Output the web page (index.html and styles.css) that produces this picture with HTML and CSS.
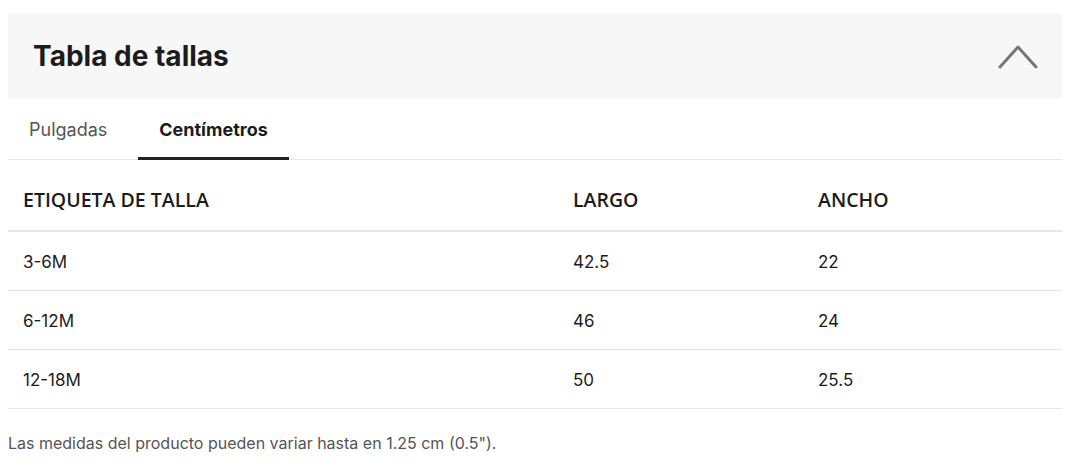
FILE: index.html
```html
<!DOCTYPE html>
<html lang="es">
<head>
<meta charset="utf-8">
<link rel="stylesheet" href="styles.css">
</head>
<body>
<section class="panel">
  <header class="panel-head">
    <h2 class="title">Tabla de tallas</h2>
    <svg class="chevron" width="40" height="26" viewBox="0 0 40 26"><path d="M2 23 L20 3 L38 23" fill="none" stroke="#777" stroke-width="3" stroke-linecap="round" stroke-linejoin="round"/></svg>
  </header>
  <nav class="tabs">
    <span class="tab">Pulgadas</span>
    <span class="tab active">Centímetros</span>
  </nav>
  <table class="sizes">
    <thead>
      <tr><th class="c1">ETIQUETA DE TALLA</th><th class="c2">LARGO</th><th class="c3">ANCHO</th></tr>
    </thead>
    <tbody>
      <tr><td>3-6M</td><td>42.5</td><td>22</td></tr>
      <tr><td>6-12M</td><td>46</td><td>24</td></tr>
      <tr><td>12-18M</td><td>50</td><td>25.5</td></tr>
    </tbody>
  </table>
  <p class="note">Las medidas del producto pueden variar hasta en 1.25 cm (0.5").</p>
</section>
</body>
</html>
```
FILE: styles.css
```css
* { box-sizing: border-box; }
body {
  margin: 0;
  padding: 13px 14px 0 8px;
  background: #fff;
  font-family: "Inter", "Open Sans", sans-serif;
  color: #222;
}
.panel { width: 1054px; }
.panel-head {
  background: #f7f7f7;
  height: 86px;
  display: flex;
  align-items: center;
  justify-content: space-between;
  padding: 0 24px 0 25px;
}
.title {
  margin: 0;
  font-family: "Inter", sans-serif;
  font-weight: 700;
  font-size: 28px;
  color: #1c1c1c;
}
.chevron { display: block; margin-top: 2px; }
.tabs {
  display: flex;
  height: 61px;
  border-bottom: 1px solid #e5e5e5;
}
.tab {
  display: flex;
  align-items: center;
  padding: 3px 21px 0 21px;
  font-size: 18px;
  color: #555;
  margin-bottom: -1px;
  border-bottom: 3px solid transparent;
}
.tab:first-child { padding-right: 31px; }
.tab.active {
  color: #1c1c1c;
  font-weight: 700;
  border-bottom-color: #222;
}
.sizes {
  width: 100%;
  border-collapse: collapse;
}
.sizes th {
  text-align: left;
  font-family: "Open Sans", sans-serif;
  font-weight: 600;
  font-size: 19.5px;
  color: #1c1c1c;
  height: 71px;
  padding: 8px 15px 0 15px;
  border-bottom: 2px solid #e5e5e5;
}
.sizes .c1 { width: 550px; }
.sizes .c2 { width: 245px; }
.sizes td {
  height: 59px;
  padding: 2px 15px 0 15px;
  font-size: 17px;
  color: #1c1c1c;
  border-bottom: 1px solid #e5e5e5;
}
.note {
  margin: 24px 0 0 0;
  font-size: 16px;
  color: #555;
}
```
